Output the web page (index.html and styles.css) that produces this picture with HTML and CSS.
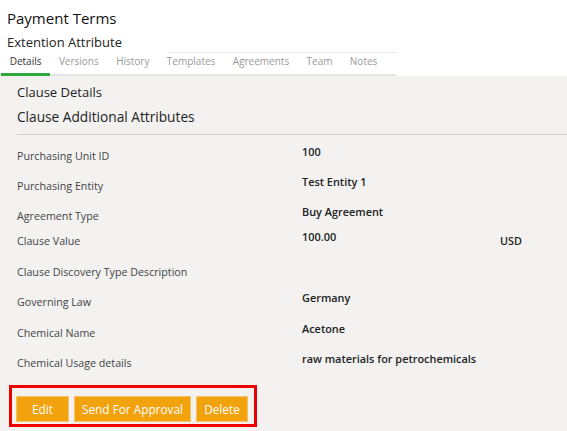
FILE: index.html
```html
<!DOCTYPE html>
<html>
<head>
<meta charset="utf-8">
<link rel="stylesheet" href="styles.css">
</head>
<body>
<div class="header">
  <div class="title">Payment Terms</div>
  <div class="subtitle">Extention Attribute</div>
</div>
<nav class="tabs">
  <span class="tab active">Details</span>
  <span class="tab">Versions</span>
  <span class="tab">History</span>
  <span class="tab">Templates</span>
  <span class="tab">Agreements</span>
  <span class="tab">Team</span>
  <span class="tab">Notes</span>
</nav>
<main class="panel">
  <div class="section-title">Clause Details</div>
  <div class="section-heading">Clause Additional Attributes</div>
  <div class="rows">
    <div class="row h30"><span class="label">Purchasing Unit ID</span><span class="value">100</span></div>
    <div class="row h30"><span class="label">Purchasing Entity</span><span class="value">Test Entity 1</span></div>
    <div class="row h25"><span class="label">Agreement Type</span><span class="value">Buy Agreement</span></div>
    <div class="row h31"><span class="label">Clause Value</span><span class="value">100.00</span><span class="unit">USD</span></div>
    <div class="row h30"><span class="label">Clause Discovery Type Description</span><span class="value"></span></div>
    <div class="row h31"><span class="label">Governing Law</span><span class="value">Germany</span></div>
    <div class="row h30"><span class="label">Chemical Name</span><span class="value">Acetone</span></div>
    <div class="row h30"><span class="label">Chemical Usage details</span><span class="value">raw materials for petrochemicals</span></div>
  </div>
  <div class="actions">
    <button class="btn btn-edit">Edit</button>
    <button class="btn btn-send">Send For Approval</button>
    <button class="btn btn-delete">Delete</button>
  </div>
</main>
</body>
</html>
```
FILE: styles.css
```css
html, body {
  margin: 0;
  padding: 0;
  background: #ffffff;
  font-family: "Open Sans", "Noto Sans", sans-serif;
  color: #222;
}

.header {
  padding: 8px 0 0 7px;
}

.title {
  font-size: 15px;
  line-height: 20px;
  color: #111;
}

.subtitle {
  font-size: 13px;
  line-height: 20px;
  margin-top: 4px;
  color: #222;
}

.tabs {
  display: flex;
  width: 396px;
  padding-left: 1px;
  box-sizing: border-box;
  border-bottom: 2px solid #e4e4e4;
  background: linear-gradient(#e6e6e6, #e6e6e6) 168px 0 / 228px 1px no-repeat;
}

.tab {
  font-size: 10px;
  line-height: 18px;
  padding: 0 8.7px 3px;
  color: #9a9a9a;
  border-bottom: 3px solid transparent;
  margin-bottom: -2px;
}

.tab.active {
  color: #333;
  border-bottom-color: #2fa83c;
}

.panel {
  background: #f3f2f1;
  padding: 6px 0 4px 17px;
  min-height: 356px;
  box-sizing: border-box;
}

.section-title {
  font-size: 13px;
  line-height: 20px;
  color: #222;
}

.section-heading {
  font-size: 13.7px;
  line-height: 20px;
  margin-top: 5px;
  padding-bottom: 7px;
  border-bottom: 1px solid #cfcfcf;
  color: #222;
}

.rows {
  padding-top: 5px;
}

.row {
  display: grid;
  grid-template-columns: 285px 198px auto;
  align-items: start;
}

.h25 { height: 25px; }
.h30 { height: 30px; }
.h31 { height: 31px; }

.label {
  font-size: 10.7px;
  line-height: 16px;
  margin-top: 8px;
  color: #444;
}

.value,
.unit {
  font-size: 10.9px;
  line-height: 16px;
  margin-top: 4px;
  font-weight: 600;
  color: #222;
}

.unit {
  margin-top: 8px;
}

.actions {
  display: inline-flex;
  gap: 5px;
  margin: 8px 0 0 -8px;
  padding: 8px 6px 2px 4px;
  border: 3px solid #ee0000;
}

.btn {
  background: #f2a20c;
  color: #fff;
  border: 1px solid #f7c36a;
  font-family: inherit;
  font-size: 11.8px;
  height: 26px;
  padding: 0;
  white-space: nowrap;
  cursor: pointer;
}

.btn-edit { width: 53px; }
.btn-send { width: 117px; }
.btn-delete { width: 52px; }
```
